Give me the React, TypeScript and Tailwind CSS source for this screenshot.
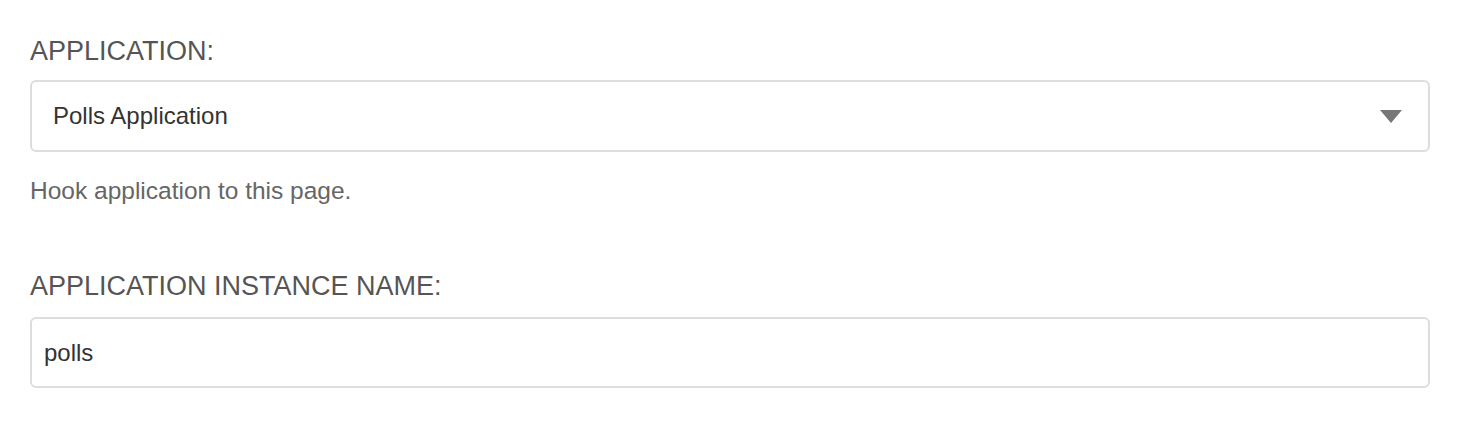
export default function App() {
  return (
    <div
      className="min-h-[428px] w-full bg-white pl-[30px] pr-[40px] pt-[36px]"
      style={{ fontFamily: '"Liberation Sans", Arial, sans-serif' }}
    >
      <label className="block text-[27px] leading-[30px] text-[#555]">APPLICATION:</label>
      <div className="mt-[14px] flex h-[72px] items-center justify-between rounded-[6px] border-2 border-[#ddd] pl-[21px] pr-[26px]">
        <span className="text-[24px] text-[#333]">Polls Application</span>
        <svg width="22" height="13" viewBox="0 0 22 13">
          <path d="M0 0 H22 L11 13 Z" fill="#777" />
        </svg>
      </div>
      <p className="mt-[24px] text-[24.5px] leading-[30px] text-[#666]">Hook application to this page.</p>

      <label className="mt-[65px] block text-[27px] leading-[30px] text-[#555]">
        APPLICATION INSTANCE NAME:
      </label>
      <div className="mt-[16px] flex h-[71px] items-center rounded-[6px] border-2 border-[#ddd] pl-[12px]">
        <span className="text-[24px] text-[#333]">polls</span>
      </div>
    </div>
  );
}
